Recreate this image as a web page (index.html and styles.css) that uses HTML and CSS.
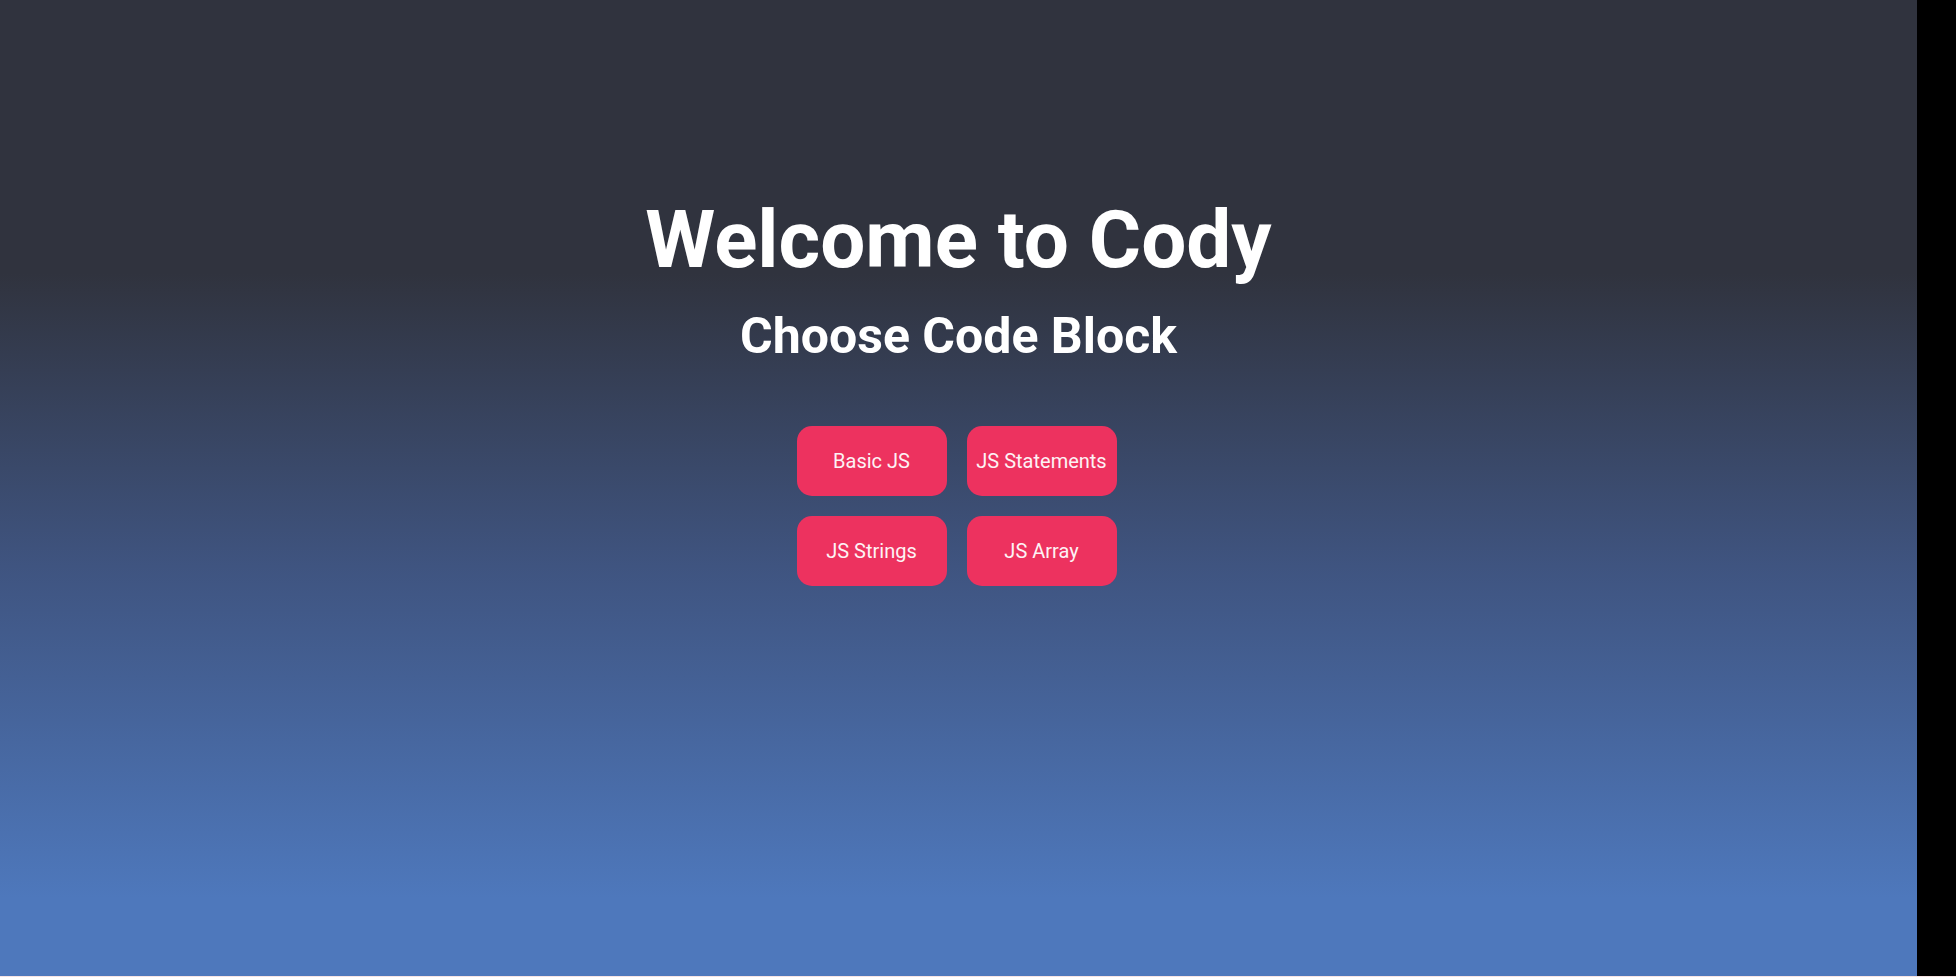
FILE: index.html
```html
<!DOCTYPE html>
<html lang="en">
<head>
<meta charset="utf-8">
<title>Cody</title>
<link rel="stylesheet" href="styles.css">
</head>
<body>
<div class="frame">
  <main class="app">
    <h1 class="title">Welcome to Cody</h1>
    <h2 class="subtitle">Choose Code Block</h2>
    <div class="blocks">
      <button class="block">Basic JS</button>
      <button class="block">JS Statements</button>
      <button class="block">JS Strings</button>
      <button class="block">JS Array</button>
    </div>
  </main>
  <div class="edge"></div>
</div>
</body>
</html>
```

FILE: styles.css
```css
html, body {
  margin: 0;
  padding: 0;
}
body {
  background: #f6e4e4;
  height: 977px;
  overflow: hidden;
  font-family: Roboto, "Liberation Sans", sans-serif;
}
.frame {
  display: flex;
  height: 976px;
}
.app {
  flex: 0 0 1917px;
  background: linear-gradient(180deg, #30333e 0%, #30333e 28%, #3f5480 58%, #4e78bc 92%, #4e78bc 100%);
  display: flex;
  flex-direction: column;
  align-items: center;
  color: #fff;
}
.edge {
  flex: 1;
  background: #000;
}
.title {
  margin: 193px 0 0;
  font-size: 80px;
  font-weight: 700;
  line-height: 94px;
}
.subtitle {
  margin: 20px 0 0;
  font-size: 50px;
  font-weight: 700;
  line-height: 58px;
}
.blocks {
  margin: 61px 4px 0 0;
  display: grid;
  grid-template-columns: 150px 150px;
  gap: 20px;
}
.block {
  height: 70px;
  border: none;
  border-radius: 15px;
  background: #ed325f;
  color: #fdf2f5;
  font-family: Roboto, "Liberation Sans", sans-serif;
  font-size: 20px;
  padding: 0;
}
```
